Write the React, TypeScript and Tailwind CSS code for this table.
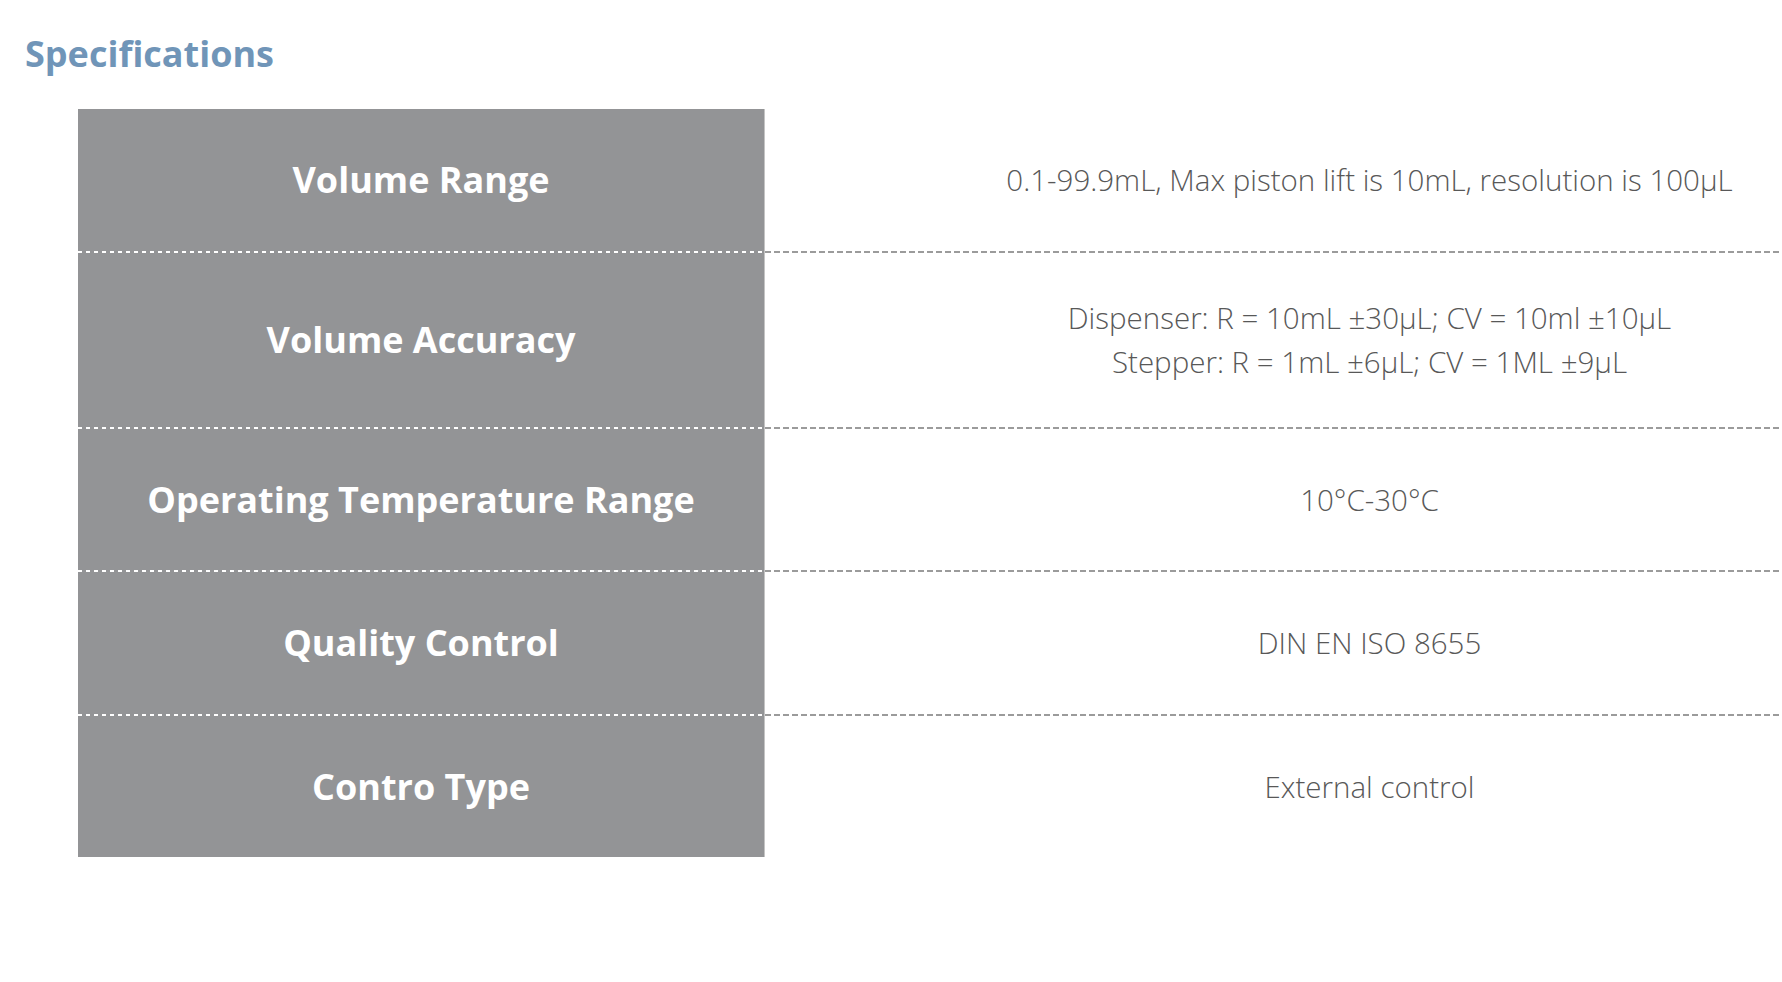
import React from "react";

const rows: { label: string; value: string[]; h: string }[] = [
  { label: "Volume Range", value: ["0.1-99.9mL, Max piston lift is 10mL, resolution is 100μL"], h: "h-[144px]" },
  { label: "Volume Accuracy", value: ["Dispenser: R = 10mL ±30μL; CV = 10ml ±10μL", "Stepper: R = 1mL ±6μL; CV = 1ML ±9μL"], h: "h-[176px]" },
  { label: "Operating Temperature Range", value: ["10°C-30°C"], h: "h-[143px]" },
  { label: "Quality Control", value: ["DIN EN ISO 8655"], h: "h-[144px]" },
  { label: "Contro Type", value: ["External control"], h: "h-[141px]" },
];

export default function App() {
  return (
    <div className="w-full h-[982px] bg-white overflow-hidden font-['Open_Sans',sans-serif]">
      <div className="h-[109px] pl-[25px] pt-[32px]">
        <h1 className="text-[36px] leading-[44px] font-bold text-[#7095b8]">Specifications</h1>
      </div>
      <div className="ml-[78px] flex flex-col">
        {rows.map((r, i) => {
          const last = i === rows.length - 1;
          return (
            <div key={r.label} className={`flex ${r.h}`}>
              <div className="w-[687px] bg-[#939496] flex flex-col border-r border-[#c4c4c4]">
                <div className="flex-1 flex items-center justify-center text-white text-[36px] font-bold">
                  {r.label}
                </div>
                {!last && (
                  <div className="h-[2px] bg-[repeating-linear-gradient(90deg,#ffffff_0_4px,transparent_4px_8px)]" />
                )}
              </div>
              <div className="flex-1 flex flex-col">
                <div className="flex-1 flex flex-col items-center justify-center pl-[192px] text-[29.5px] leading-[44px] text-[#585858] font-light">
                  {r.value.map((v) => (
                    <div key={v}>{v}</div>
                  ))}
                </div>
                {!last && (
                  <div className="h-[2px] bg-[repeating-linear-gradient(90deg,#9b9b9b_0_6px,transparent_6px_9px)]" />
                )}
              </div>
            </div>
          );
        })}
      </div>
    </div>
  );
}
